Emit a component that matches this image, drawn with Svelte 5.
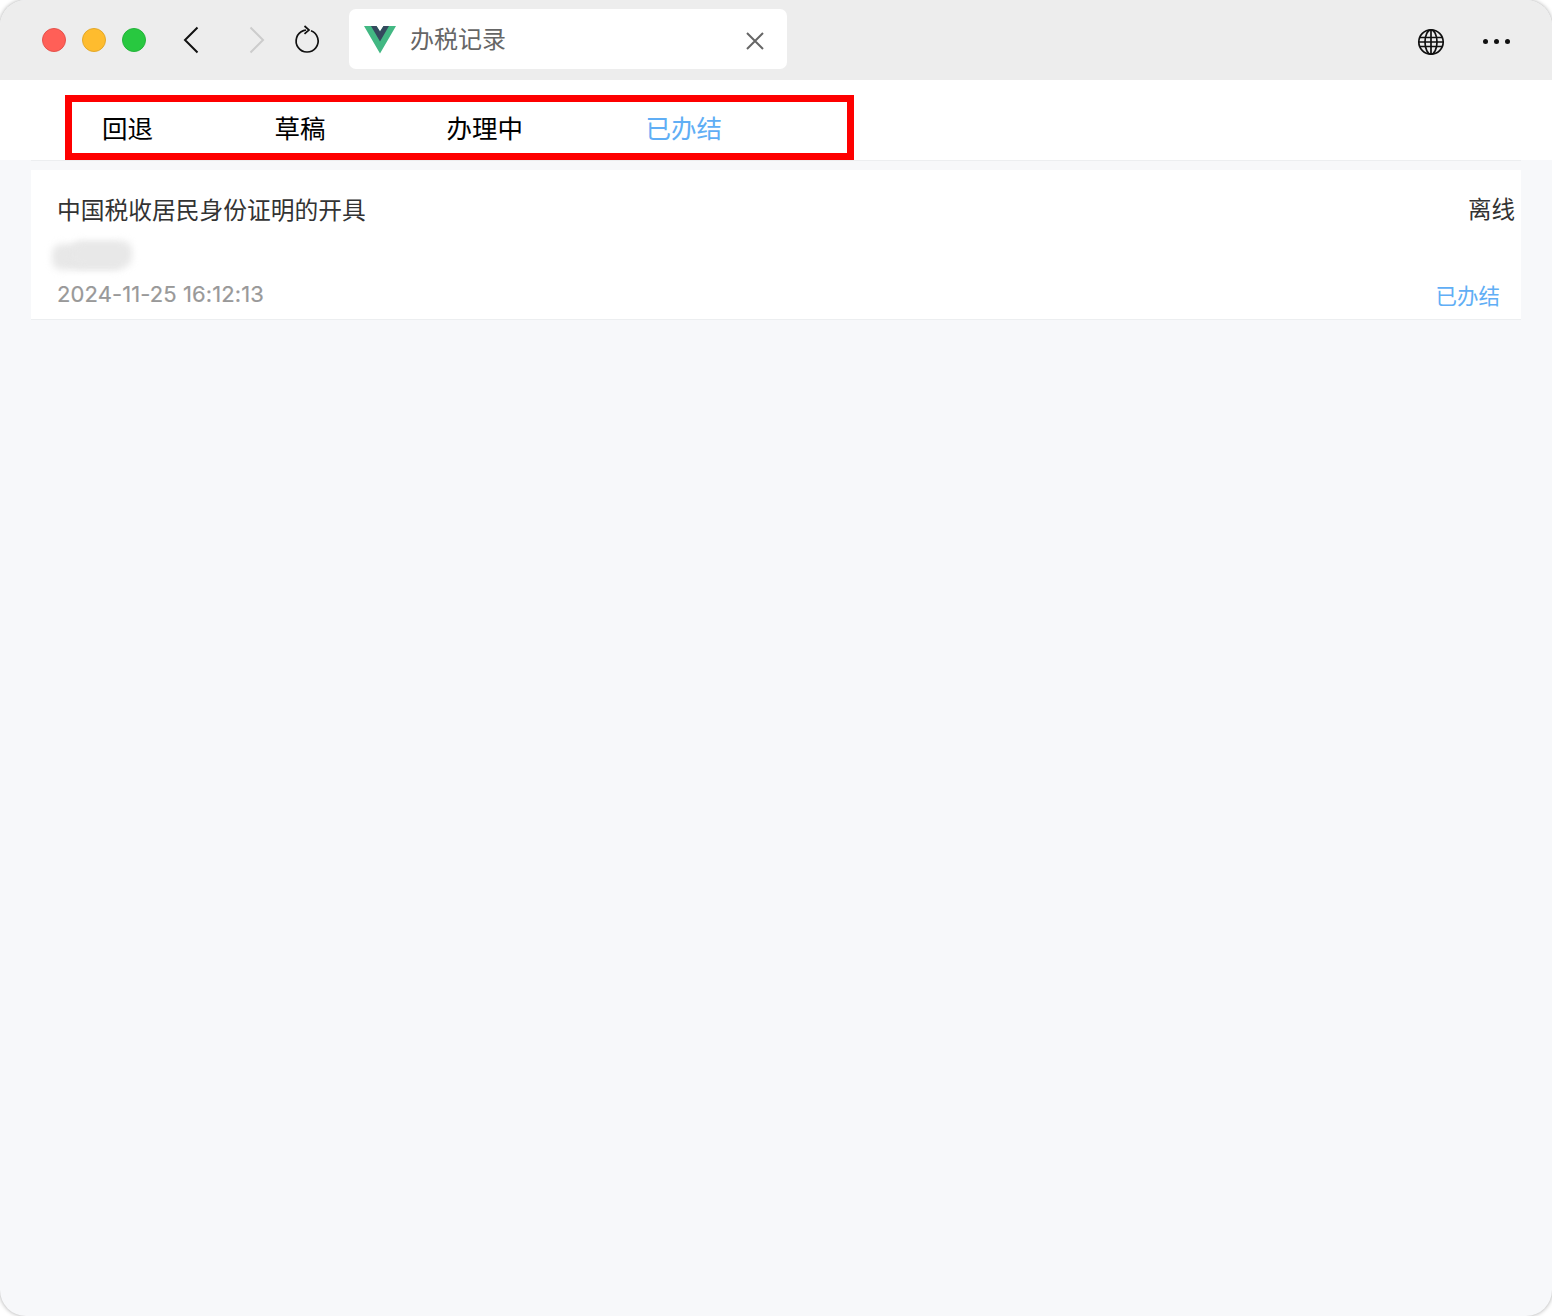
<script>
  const tabs = [
    { label: '回退', width: 172.500 },
    { label: '草稿', width: 172 },
    { label: '办理中', width: 199 },
    { label: '已办结', width: 200, active: true }
  ];
</script>

<div class="window">
  <header class="chrome">
    <div class="lights">
      <span class="light red"></span>
      <span class="light yellow"></span>
      <span class="light green"></span>
    </div>
    <div class="nav">
      <svg width="18" height="28" viewBox="0 0 18 28"><path d="M14.500 1.500 2 14 14.500 26.500" fill="none" stroke="#111" stroke-width="2"/></svg>
      <svg class="fwd" width="18" height="28" viewBox="0 0 18 28"><path d="M2.500 1.500 15 14 2.500 26.500" fill="none" stroke="#ccc" stroke-width="2"/></svg>
      <svg class="reload" width="28" height="30" viewBox="0 0 28 30"><path d="M18 5.700A11 11 0 1 1 10.500 5.600L13 5" fill="none" stroke="#111" stroke-width="1.700"/><path d="M11.500 1 16 5 11.500 8.800" fill="none" stroke="#111" stroke-width="1.700"/></svg>
    </div>
    <div class="tab">
      <svg class="logo" width="32" height="28" viewBox="0 0 32 28">
        <path d="M0 0h12.500L16 5.500 19.500 0H32L16 27.500Z" fill="#42b883"/>
        <path d="M7 0h5.500L16 5.500 19.500 0H25L16 15.500Z" fill="#35495e"/>
      </svg>
      <span class="tab-title">办税记录</span>
      <svg class="close" width="18" height="18" viewBox="0 0 18 18"><path d="M1 1l16 16M17 1 1 17" stroke="#666" stroke-width="2"/></svg>
    </div>
    <svg class="globe" width="28" height="28" viewBox="0 0 28 28" fill="none" stroke="#111" stroke-width="1.700">
      <circle cx="14" cy="14" r="12.200"/>
      <ellipse cx="14" cy="14" rx="6" ry="12.200"/>
      <path d="M14 2v24M3 9.500h22M3 18.500h22M1.800 14h24.400"/>
    </svg>
    <div class="more"><i></i><i></i><i></i></div>
  </header>

  <nav class="tabs">
    {#each tabs as t}
      <div class="tab-item" class:active={t.active} style="width: {t.width}px">{t.label}</div>
    {/each}
    <div class="annot"></div>
  </nav>

  <main class="page">
    <section class="card">
      <div class="row top">
        <span class="title">中国税收居民身份证明的开具</span>
        <span class="mode">离线</span>
      </div>
      <div class="blur-wrap"><span class="blur-a"></span><span class="blur-b"></span></div>
      <div class="row bottom">
        <span class="date">2024-11-25 16:12:13</span>
        <span class="status">已办结</span>
      </div>
    </section>
  </main>
</div>

<style>
  :global(body) {
    margin: 0;
    background: #fff;
    overflow: hidden;
  }
  .window {
    width: 1552px;
    height: 1316px;
    display: flex;
    flex-direction: column;
    border-radius: 26px;
    overflow: hidden;
    box-shadow: 0 0 4px rgba(0, 0, 0, 0.35);
    font-family: "Noto Sans CJK SC", "Liberation Sans", sans-serif;
    background: #f7f8fa;
  }
  .chrome {
    height: 80px;
    flex: none;
    background: #ededed;
    display: flex;
    align-items: center;
    box-sizing: border-box;
    padding-left: 42px;
  }
  .lights {
    display: flex;
    gap: 16px;
  }
  .light {
    width: 24px;
    height: 24px;
    border-radius: 50%;
    box-sizing: border-box;
    border: 1px solid;
  }
  .red { background: #ff5f57; border-color: #e5524c; }
  .yellow { background: #febc2e; border-color: #e3a82a; }
  .green { background: #28c840; border-color: #24b43a; }
  .nav {
    display: flex;
    align-items: center;
    margin-left: 37px;
    margin-top: -1px;
  }
  .fwd { margin-left: 47px; }
  .reload { margin-left: 27px; }
  .tab {
    margin-left: 28px;
    width: 438px;
    height: 60px;
    margin-top: -2px;
    background: #fff;
    border-radius: 7px;
    display: flex;
    align-items: center;
    box-sizing: border-box;
    padding-left: 15px;
  }
  .logo { flex: none; margin-top: 1px; }
  .tab-title {
    margin-left: 14px;
    font-size: 24px;
    color: #666;
    width: 336px;
    line-height: 58px;
    margin-bottom: 2px;
  }
  .close { flex: none; margin-top: 3px; }
  .globe {
    margin-left: 630px;
    margin-top: 3px;
  }
  .more {
    display: flex;
    gap: 6px;
    margin-left: 38px;
    margin-top: 2px;
  }
  .more i {
    width: 5px;
    height: 5px;
    border-radius: 50%;
    background: #111;
  }
  .tabs {
    position: relative;
    height: 80px;
    flex: none;
    background: #fff;
    display: flex;
    align-items: center;
    box-sizing: border-box;
    padding-left: 102px;
    padding-top: 14px;
  }
  .tab-item {
    font-size: 25.500px;
    line-height: 40px;
    color: #000;
    flex: none;
  }
  .tab-item.active { color: #60aef5; }
  .annot {
    position: absolute;
    left: 65px;
    top: 15px;
    width: 789px;
    height: 65px;
    box-sizing: border-box;
    border: 7px solid #fe0000;
    pointer-events: none;
  }
  .page {
    flex: 1;
    margin: 0 31px;
    border-top: 1px solid #eceef0;
  }
  .card {
    margin-top: 9px;
    height: 150px;
    box-sizing: border-box;
    background: #fff;
    border-bottom: 1px solid #eceef0;
    position: relative;
    padding-left: 27px;
    display: flex;
    flex-direction: column;
  }
  .row {
    display: flex;
    justify-content: space-between;
    align-items: center;
  }
  .top {
    height: 36px;
    margin-top: 20px;
    padding-right: 6px;
  }
  .title {
    font-size: 23.750px;
    color: #333;
    margin-left: -1px;
  }
  .mode {
    font-size: 23.500px;
    color: #333;
  }
  .blur-wrap {
    position: relative;
    height: 32px;
    margin-top: 14px;
    margin-left: -6px;
  }
  .blur-a, .blur-b {
    position: absolute;
    background: #e8e8e8;
    filter: blur(3.500px);
    border-radius: 9px;
  }
  .blur-a { left: 0; top: 4px; width: 72px; height: 26px; }
  .blur-b { left: 20px; top: 1px; width: 60px; height: 26px; }
  .bottom {
    height: 32px;
    margin-top: 6px;
    padding-right: 21px;
  }
  .date {
    font-family: Inter, "Liberation Sans", sans-serif;
    font-size: 22px;
    color: #999;
    margin-left: -1px;
    letter-spacing: 0.1px;
    -webkit-text-stroke: 0.2px #999;
  }
  .status {
    font-size: 21.500px;
    color: #60aef5;
    margin-top: 0;
  }
</style>
